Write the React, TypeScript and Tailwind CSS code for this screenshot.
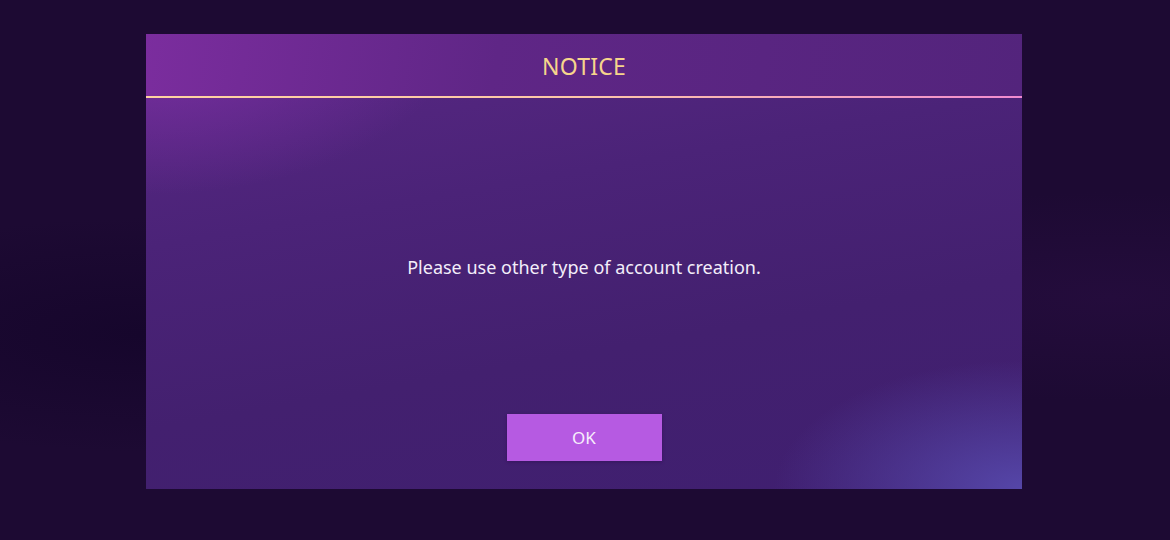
export default function App() {
  return (
    <div className="relative flex h-[540px] w-[1170px] items-start justify-center overflow-hidden bg-[#1d0a33] pt-[34px] font-['Noto_Sans',sans-serif]">
      <div className="pointer-events-none absolute inset-0 bg-[radial-gradient(ellipse_at_12%_62%,#16062c_0%,transparent_25%),radial-gradient(ellipse_at_95%_55%,#240c3c_0%,transparent_25%)]" />
      <div className="relative ml-[-2px] flex h-[455px] w-[876px] flex-col overflow-hidden bg-[linear-gradient(170deg,#5a2885_0%,#4b2378_35%,#43206f_65%,#3f1f70_100%)]">
        <div className="pointer-events-none absolute inset-0 bg-[radial-gradient(ellipse_at_100%_100%,#5546a8_0%,transparent_20%)]" />
        <div className="pointer-events-none absolute inset-0 bg-[radial-gradient(ellipse_at_0%_0%,#7c2fa3_0%,transparent_25%)]" />
        <div className="relative flex h-[62px] items-center justify-center bg-[linear-gradient(100deg,#7b2d9e_0%,#5f2686_40%,#53247c_100%)]">
          <span className="pt-[2px] text-[23px] tracking-[0.2px] text-[#f6d58c]">NOTICE</span>
        </div>
        <div className="relative h-[2px] bg-[linear-gradient(90deg,#ffd3a0_0%,#fdc6a8_50%,#f08ad0_100%)]" />
        <div className="relative flex flex-1 flex-col items-center">
          <p className="mt-[156px] text-[18px] text-[#f3eefa]">Please use other type of account creation.</p>
          <button className="mt-[133px] flex h-[47px] w-[155px] items-center justify-center bg-[#b65ae2] text-[17px] text-[#f6eefc] shadow-[0_1px_3px_rgba(40,10,70,0.45)]">
            OK
          </button>
        </div>
      </div>
    </div>
  );
}
